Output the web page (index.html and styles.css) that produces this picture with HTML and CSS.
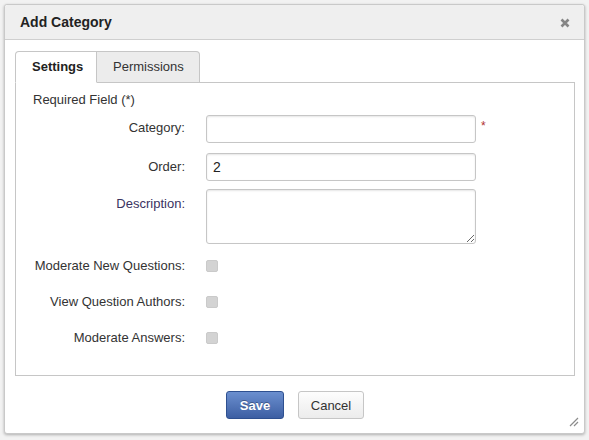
FILE: index.html
```html
<!DOCTYPE html>
<html>
<head>
<meta charset="utf-8">
<link rel="stylesheet" href="styles.css">
</head>
<body>
<div class="dialog">
  <div class="dlg-head">
    <span class="dlg-title">Add Category</span>
    <span class="close"><svg width="10" height="10" viewBox="0 0 10 10"><path d="M1.5 1.5 L8.5 8.5 M8.5 1.5 L1.5 8.5" stroke="#858585" stroke-width="2.6" stroke-linecap="butt"/></svg></span>
  </div>
  <div class="dlg-body">
    <div class="tabs">
      <div class="tab active">Settings</div>
      <div class="tab">Permissions</div>
    </div>
    <div class="panel">
      <div class="req">Required Field (*)</div>
      <div class="row">
        <label class="lbl">Category:</label>
        <input class="text" type="text">
        <span class="star">*</span>
      </div>
      <div class="row row-order">
        <label class="lbl">Order:</label>
        <input class="text" type="text" value="2">
      </div>
      <div class="row row-desc">
        <label class="lbl lbl-desc">Description:</label>
        <textarea class="area"></textarea>
      </div>
      <div class="row row-check first">
        <label class="lbl-c">Moderate New Questions:</label>
        <span class="check"></span>
      </div>
      <div class="row row-check">
        <label class="lbl-c">View Question Authors:</label>
        <span class="check"></span>
      </div>
      <div class="row row-check">
        <label class="lbl-c">Moderate Answers:</label>
        <span class="check"></span>
      </div>
    </div>
    <div class="actions">
      <button class="btn primary">Save</button>
      <button class="btn">Cancel</button>
    </div>
  </div>
  <svg class="grip" width="12" height="12" viewBox="0 0 12 12"><path d="M11 3 L3 11 M11 7 L7 11" stroke="#8c8c8c" stroke-width="1.2"/></svg>
</div>
</body>
</html>
```
FILE: styles.css
```css
* { box-sizing: border-box; }
html, body { margin: 0; padding: 0; }
body {
  background: #f2f2f2;
  font-family: Arial, "Liberation Sans", sans-serif;
  color: #333;
  width: 589px;
  height: 440px;
  overflow: hidden;
}
.dialog {
  position: relative;
  margin: 4px 0 0 4px;
  width: 581px;
  height: 430px;
  background: #fff;
  border: 1px solid #c9c9c9;
  border-radius: 3px;
  box-shadow: 0 1px 3px rgba(0,0,0,0.28);
}
.dlg-head {
  height: 35px;
  background: #efefef;
  border-bottom: 1px solid #cfcfcf;
  border-radius: 3px 3px 0 0;
  display: flex;
  align-items: center;
  justify-content: space-between;
  padding: 0 14px 0 15px;
}
.dlg-title {
  font-weight: bold;
  font-size: 14px;
  color: #222;
}
.close { display: flex; margin-top: 1px; }
.dlg-body {
  padding: 11px 9px 0 10px;
}
.tabs {
  display: flex;
  margin-bottom: -1px;
  position: relative;
  z-index: 1;
}
.tab {
  height: 32px;
  line-height: 30px;
  font-size: 13px;
  color: #333;
  padding: 0 15px;
  background: #ececec;
  border: 1px solid #c6c6c6;
  border-left: none;
  border-radius: 0 4px 0 0;
}
.tab.active {
  width: 82px;
  padding: 0 0 0 16px;
  background: #fff;
  font-weight: bold;
  border-left: 1px solid #c6c6c6;
  border-bottom-color: #fff;
  border-radius: 4px 0 0 0;
  color: #222;
}
.tab:not(.active) { width: 103px; padding-left: 16px; }
.panel {
  height: 294px;
  border: 1px solid #c6c6c6;
  padding-top: 9px;
}
.req {
  font-size: 13px;
  line-height: 16px;
  margin-left: 17px;
}
.row {
  display: grid;
  grid-template-columns: 169px 270px auto;
  column-gap: 21px;
  align-items: start;
  margin-top: 7px;
}
.row-order { margin-top: 10px; }
.row-desc { margin-top: 8px; }
.row-check { margin-top: 8px; height: 28px; align-items: center; }
.lbl, .lbl-c {
  text-align: right;
  font-size: 13px;
  line-height: 16px;
  color: #333;
}
.lbl { padding-top: 5px; }
.row-order .lbl { padding-top: 6px; }
.lbl-desc { padding-top: 7px; color: #3a3361; }
.lbl-c { line-height: 28px; }
.text, .area {
  width: 270px;
  border: 1px solid #c6c6c6;
  border-radius: 3px;
  box-shadow: inset 0 1px 2px rgba(0,0,0,0.1);
  background: #fff;
  font-family: Arial, "Liberation Sans", sans-serif;
  font-size: 14px;
  color: #222;
  padding: 0 6px;
  margin: 0;
  outline: none;
}
.text { height: 28px; }
.area { height: 55px; resize: vertical; display: block; }
.star {
  color: #b03030;
  font-size: 12px;
  line-height: 14px;
  padding-top: 4px;
  margin-left: -16px;
}
.check {
  width: 12px;
  height: 12px;
  border-radius: 2px;
  background: #d3d3d3;
  border: 1px solid #cacaca;
}
.actions {
  display: flex;
  justify-content: center;
  gap: 14px;
  margin-top: 15px;
}
.btn {
  height: 28px;
  border-radius: 3px;
  font-family: Arial, "Liberation Sans", sans-serif;
  font-size: 13px;
  padding: 0;
  cursor: pointer;
  width: 66px;
  color: #333;
  background: linear-gradient(#fdfdfd, #ececec);
  border: 1px solid #c6c6c6;
}
.btn.primary {
  width: 58px;
  color: #fff;
  font-weight: bold;
  background: linear-gradient(#6b8fcf, #3d5fa3);
  border: 1px solid #2e5090;
  text-shadow: 0 -1px 0 rgba(0,0,0,0.3);
}
.grip {
  position: absolute;
  right: 5px;
  bottom: 6px;
}
```
